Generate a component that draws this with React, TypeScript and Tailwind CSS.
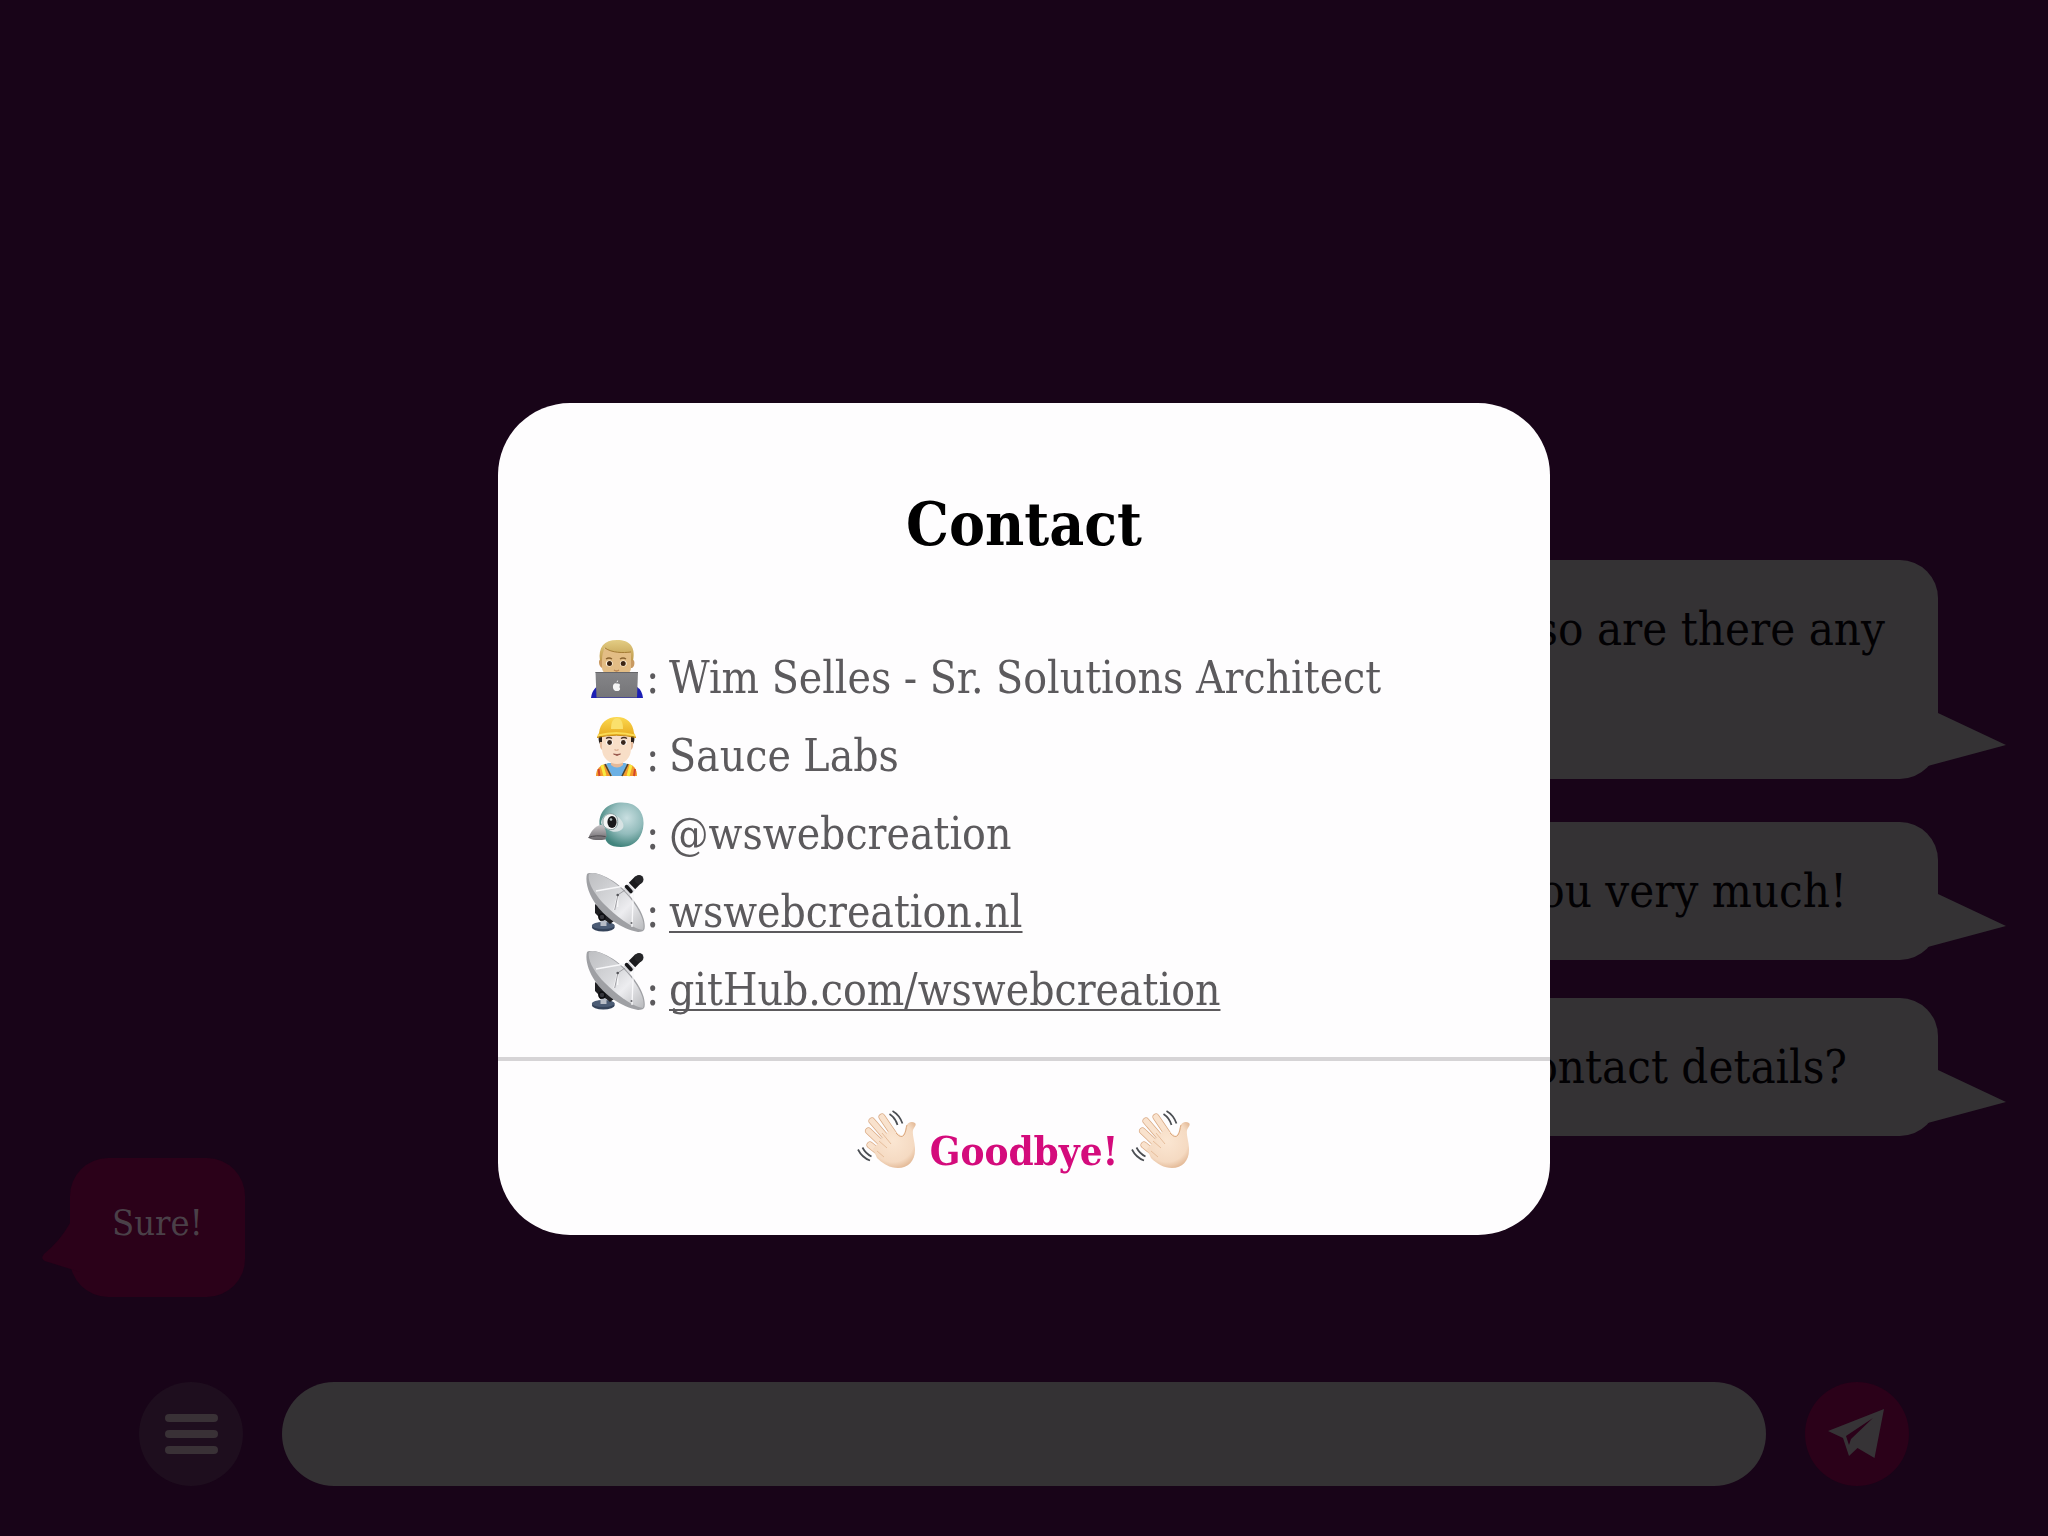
import type { ReactNode } from "react";

const Technologist = () => (
  <svg viewBox="0 0 60 60" className="size-15 shrink-0" aria-hidden="true">
    <defs>
      <linearGradient id="hair" x1="0" y1="0" x2="0" y2="1">
        <stop offset="0" stopColor="#e3cd84" />
        <stop offset="1" stopColor="#c09a4c" />
      </linearGradient>
      <linearGradient id="laptop" x1="0" y1="0" x2="0" y2="1">
        <stop offset="0" stopColor="#858588" />
        <stop offset="1" stopColor="#757578" />
      </linearGradient>
    </defs>
    <path d="M5 59c1-8 5-12 10-13h31c6 1 10 5 11 13z" fill="#1c1fb4" />
    <path d="M14 21c-2 0-1 7 2 8h30c3-1 3-8 1-8z" fill="#c99a62" />
    <path d="M16 13c0-7 29-7 29 0v16c0 5-6 9-14 9s-15-4-15-9z" fill="#e3bd85" />
    <path d="M14 22c-2-14 4-21 17-21s19 7 16 21l-2-1v-8c-8 1-19 1-26-4-2 3-3 8-3 12z" fill="url(#hair)" />
    <path d="M19 9c7 5 18 5 26 4" fill="none" stroke="#a57c35" strokeWidth="1" />
    <path d="M20 20q3-2 6 0M34 20q3-2 6 0" fill="none" stroke="#8a6330" strokeWidth="1.4" />
    <ellipse cx="23.3" cy="24.5" rx="3.4" ry="3" fill="#fff4df" />
    <ellipse cx="37.3" cy="24.5" rx="3.4" ry="3" fill="#fff4df" />
    <circle cx="23.5" cy="24.5" r="2.5" fill="#3b2413" />
    <circle cx="37.2" cy="24.5" r="2.5" fill="#3b2413" />
    <path d="M28 31q2.5 2 5 0" fill="none" stroke="#b98350" strokeWidth="1.3" />
    <path d="M9.5 33H52l-1 25.5H10.500z" fill="url(#laptop)" />
    <path d="M9.5 33.5H52" stroke="#66666a" strokeWidth="1" />
    <path d="M30.500 44.500c-4-1.500-5 6-1 7.500h3c3-2 1-3 1-4s1-2 0-3-2-.5-3-.5zM30.500 43.500q.2-2 1.700-2.200 0 2-1.700 2.200z" fill="#f4f4f4" />
  </svg>
);

const Worker = () => (
  <svg viewBox="0 0 60 60" className="size-15 shrink-0" aria-hidden="true">
    <defs>
      <linearGradient id="hat" x1="0" y1="0" x2="0" y2="1">
        <stop offset="0" stopColor="#fbd850" />
        <stop offset="1" stopColor="#e7a91c" />
      </linearGradient>
    </defs>
    <path d="M10 59c0-7 4-11 10-12h22c6 1 9 5 9 12z" fill="#f39a2b" />
    <path d="M22 46l-2 1 6 12h10l5-12-2-1z" fill="#6bb0e4" />
    <path d="M19 47l6 12M42 47l-6 12" stroke="#4a4436" strokeWidth="1.6" />
    <path d="M16 48l3 11M45 48l-3 11" stroke="#f7e940" strokeWidth="3" />
    <path d="M12.500 52l1 7M49 52l-1 7" stroke="#d4462a" strokeWidth="2" />
    <path d="M25 40h12v8q-6 5-12 0z" fill="#e5b998" />
    <path d="M13 18c-1 5 0 9 3 11h29c3-2 4-6 3-11z" fill="#2b211b" />
    <path d="M14 25q-1 5 2 8h29q3-3 2-8z" fill="#e7bd9f" />
    <path d="M16 18h29v14c0 9-7 15-14 15s-15-6-15-15z" fill="#f8dec7" />
    <path d="M20 21.500q3-2 6 0M35 21.500q3-2 6 0" fill="none" stroke="#463026" strokeWidth="1.3" />
    <ellipse cx="23.500" cy="25.500" rx="3.300" ry="2.800" fill="#fff" />
    <ellipse cx="37.400" cy="25.500" rx="3.300" ry="2.800" fill="#fff" />
    <circle cx="23.600" cy="25.500" r="2.400" fill="#38261c" />
    <circle cx="37.300" cy="25.500" r="2.400" fill="#38261c" />
    <path d="M28.500 32.500q2 1.500 4 0" fill="none" stroke="#d9aa8c" strokeWidth="1.2" />
    <path d="M27.500 37q3.500 1 7 0l-3.500 1.500z" fill="#8f4c42" stroke="#8f4c42" strokeWidth=".8" />
    <path d="M13 16C14 6 21 0 31 0s16 6 17 16l2 4q-19-4-39 0z" fill="url(#hat)" />
    <path d="M25 12c0-7 2-11 6-11s6 4 6 11" fill="#fae06c" />
    <path d="M12 18.500q18-5 37 0" fill="none" stroke="#fbdc55" strokeWidth="2" />
    <path d="M11 20.500q19-4.500 39 0" fill="none" stroke="#c98d12" strokeWidth="1" />
  </svg>
);

const Bird = () => (
  <svg viewBox="0 0 60 60" className="size-15 shrink-0" aria-hidden="true">
    <defs>
      <radialGradient id="head" cx=".62" cy=".35" r=".65">
        <stop offset="0" stopColor="#c9dfe1" />
        <stop offset=".55" stopColor="#93bcbc" />
        <stop offset="1" stopColor="#42847d" />
      </radialGradient>
      <linearGradient id="beak" x1="0" y1="0" x2="0" y2="1">
        <stop offset="0" stopColor="#cbc7ca" />
        <stop offset="1" stopColor="#69666a" />
      </linearGradient>
    </defs>
    <path d="M13.500 29C13 16 22 7.500 36 7.500S58 16 57.500 29 49 52 35 52c-12 0-15-5-16-9-4-4-5-9-5.500-14z" fill="url(#head)" />
    <path d="M15 28c1-8 8-11 14-8s10 9 8 13-10 5-14 2c-3-1-6-3-8-7z" fill="#d7e2e3" />
    <path d="M17 24c3-6 9-7 13-3 3 4 2 11-2 13s-10-1-11-5z" fill="#f4f6f6" stroke="#6f8c8c" strokeWidth=".8" />
    <ellipse cx="26" cy="27" rx="4.600" ry="6" fill="#19191b" />
    <circle cx="25" cy="24.500" r="1.300" fill="#aebbbb" />
    <path d="M2.500 43c2-7 7-12 13-13.500 3 2 5 6 5 12l-1.500 3c-5 1-12 1-16.500-1.500z" fill="url(#beak)" />
    <path d="M2.500 42.500c5-2 11-2 17-1" fill="none" stroke="#4b484c" strokeWidth="1" />
  </svg>
);

const Dish = () => (
  <svg viewBox="0 0 60 60" className="size-15 shrink-0" aria-hidden="true">
    <defs>
      <linearGradient id="dish" x1="0" y1="0" x2="1" y2="1">
        <stop offset="0" stopColor="#bdbec1" />
        <stop offset=".45" stopColor="#d8d9dc" />
        <stop offset=".65" stopColor="#ededf0" />
        <stop offset="1" stopColor="#b9babd" />
      </linearGradient>
    </defs>
    <ellipse cx="17.300" cy="54" rx="11.500" ry="4.500" fill="#35435a" />
    <ellipse cx="17.300" cy="52.500" rx="11.500" ry="3.500" fill="#4c5c75" />
    <path d="M16 38v15M19 41v12" stroke="#b8bdc7" strokeWidth="3" />
    <path d="M9 31l11 8 8 9-4 3-5-4-5 1-2-5-3-3z" fill="#1e1e22" />
    <circle cx="16" cy="44" r="3" fill="#35353b" stroke="#0d0d10" strokeWidth="1.5" />
    <path d="M1 1C-1 8 2 20 9 30c9 14 27 26 43 29 4 0 6-1 6.500-3C61 42 45 21 30 10 17 1 5-2 1 1z" fill="#9fa0a4" />
    <path d="M3 1c-2 8 6 21 16 31 12 12 28 24 38 25 4-11-11-33-27-46C18 2 7-2 3 1z" fill="url(#dish)" />
    <path d="M10 18l34-6M31.700 22L28 37M31.700 22v12M47.500 15l-1.500 39" fill="none" stroke="#f8f8fa" strokeWidth="1.3" />
    <path d="M31.700 22L42 15M31.700 23l-3 14" stroke="#8b8c90" strokeWidth=".8" />
    <circle cx="31.700" cy="22" r="1.300" fill="#55565a" />
    <circle cx="45.500" cy="50" r="1" fill="#66676b" />
    <path d="M40 13l6 7" stroke="#d7d7db" strokeWidth="7" />
    <path d="M40.500 13.500l4.500 5" stroke="#17171a" strokeWidth="3.5" strokeLinecap="round" />
    <path d="M46 13l6.500-6.500" stroke="#1b1b1e" strokeWidth="9" />
    <circle cx="53" cy="6.500" r="4.500" fill="#252528" />
  </svg>
);

const Wave = () => (
  <svg viewBox="0 0 60 60" className="size-15 shrink-0" aria-hidden="true">
    <defs>
      <radialGradient id="palm" gradientUnits="userSpaceOnUse" cx="36" cy="32" r="30">
        <stop offset="0" stopColor="#fbe6d2" />
        <stop offset=".7" stopColor="#f5dac2" />
        <stop offset="1" stopColor="#dfb18c" />
      </radialGradient>
    </defs>
    <g fill="none" strokeLinecap="round">
      <path d="M25 8l15 22M15 12l18 21M11.500 22l19 18M13 36l15 12" stroke="#d9a983" strokeWidth="7" />
      <path d="M25 8l15 22M15 12l18 21M11.500 22l19 18M13 36l15 12" stroke="#f9e2cd" strokeWidth="5.6" />
    </g>
    <path d="M34 20l11 7c3-3 3-6 4-10 2-4 6-5 9-3 2 2-1 4-2 7-1 5 2 11 2 20 0 11-7 18-17 18-8 0-15-4-21-10l-4-9 11-13z" fill="url(#palm)" />
    <path d="M25 24l9 11M22 32l8 7M20 42l7 6" fill="none" stroke="#e6bd9b" strokeWidth="1" />
    <path d="M39 24q5 6 8 2c2-3 2-7 3-10" fill="none" stroke="#dba981" strokeWidth="1" />
    <path d="M35.500 2q7 4 10 12.500M32.500 5q6 4 8 11M1 40.500q4 8 12 11M5.500 38.500q3 6 9 9" fill="none" stroke="#4b4e53" strokeWidth="1.7" />
  </svg>
);

const contacts: { icon: ReactNode; text: string; href?: string }[] = [
  { icon: <Technologist />, text: "Wim Selles - Sr. Solutions Architect" },
  { icon: <Worker />, text: "Sauce Labs" },
  { icon: <Bird />, text: "@wswebcreation" },
  { icon: <Dish />, text: "wswebcreation.nl", href: "#website" },
  { icon: <Dish />, text: "gitHub.com/wswebcreation", href: "#github" },
];

function Bubble({ className, children }: { className: string; children: ReactNode }) {
  return (
    <div
      className={`relative w-3/5 self-end rounded-[38px] bg-[#343234] py-[29px] text-right text-[47px] leading-[80px] text-[#020103] ${className}`}
    >
      {children}
      <svg viewBox="0 0 82 54" className="absolute bottom-3 -right-[68px] h-[54px] w-[82px]" aria-hidden="true">
        <path d="M14 0l68 32L0 54V0z" fill="#343234" />
      </svg>
    </div>
  );
}

function ContactDialog() {
  return (
    <div className="fixed inset-0 flex items-center justify-center pt-[102px]">
      <section
        role="dialog"
        aria-labelledby="contact-title"
        className="w-[1052px] max-w-full overflow-hidden rounded-[72px] bg-[#fefdfe]"
      >
        <h2 id="contact-title" className="pt-[76px] text-center text-[60px] leading-[90px] font-bold text-black">
          Contact
        </h2>
        <ul className="px-[88px] pt-[70px] pb-7 text-[44px] text-[#5c5a5d]">
          {contacts.map(({ icon, text, href }, i) => (
            <li key={i} className="flex h-[78px] items-start leading-[78px]">
              {icon}
              <span className="w-[23px]">:</span>
              {href ? (
                <a href={href} className="underline decoration-2 underline-offset-4 [text-decoration-skip-ink:none]">
                  {text}
                </a>
              ) : (
                <span>{text}</span>
              )}
            </li>
          ))}
        </ul>
        <div className="flex h-[178px] items-start justify-center gap-[13px] border-t-4 border-[#d6d4d6] pt-12">
          <Wave />
          <strong className="text-[40px] leading-[84px] font-bold text-[#d40b7c]">Goodbye!</strong>
          <Wave />
        </div>
      </section>
    </div>
  );
}

export default function App() {
  return (
    <div className="flex min-h-screen flex-col justify-end overflow-hidden bg-[#180418] font-['DejaVu_Serif_Condensed','DejaVu_Serif',serif]">
      <main className="flex flex-col pr-[110px] pl-[70px]">
        <Bubble className="mb-[43px] min-h-[219px] pr-[53px]">so are there any</Bubble>
        <Bubble className="mb-[38px] pr-[91px]">you very much!</Bubble>
        <Bubble className="pr-[91px]">contact details?</Bubble>
        <div className="relative mt-[22px] self-start rounded-[38px] bg-[#2b0119] px-[42px] pt-[25px] pb-[34px] text-[36px] leading-[80px] text-[#4a4048]">
          Sure!
          <svg viewBox="0 0 42 50" className="absolute bottom-6 -left-7 h-[50px] w-[42px]" aria-hidden="true">
            <path d="M28 0Q18 18 2 31q-5 6 4 8l32 10h4V0z" fill="#2b0119" />
          </svg>
        </div>
      </main>
      <form className="mt-[85px] flex gap-[39px] px-[139px] pb-[50px]" onSubmit={(e) => e.preventDefault()}>
        <button
          type="button"
          aria-label="Menu"
          className="flex size-[104px] shrink-0 flex-col items-center justify-center gap-2 rounded-full bg-[#1e0e1e]"
        >
          <span className="h-2 w-[53px] rounded-full bg-[#393136]" />
          <span className="h-2 w-[53px] rounded-full bg-[#393136]" />
          <span className="h-2 w-[53px] rounded-full bg-[#393136]" />
        </button>
        <input
          type="text"
          aria-label="Message"
          className="h-[104px] min-w-0 flex-1 rounded-full bg-[#343234] px-12 text-[42px] outline-none"
        />
        <button type="submit" aria-label="Send" className="size-[104px] shrink-0 rounded-full bg-[#2b0119]">
          <svg viewBox="0 0 104 104" className="size-full" aria-hidden="true">
            <path d="M23 49L79 27l-9.500 49-17-10L44 74l-6-18z" fill="#363336" />
            <path d="M41 54l27-18-22 21-2 6z" fill="#2b0119" />
          </svg>
        </button>
      </form>
      <ContactDialog />
    </div>
  );
}
